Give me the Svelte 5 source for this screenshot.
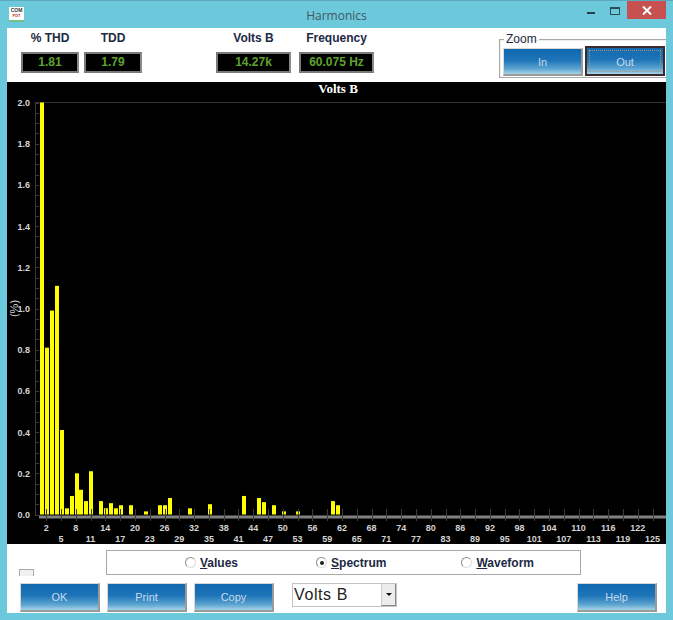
<script lang="ts">
  // Harmonic magnitudes by bar index (only non-empty bins)
  const bars: Record<number, number> = {
    0: 2.0, 1: 0.81, 2: 0.99, 3: 1.11, 4: 0.41, 5: 0.03, 6: 0.09, 7: 0.2, 8: 0.12, 9: 0.065, 10: 0.21,
    12: 0.065, 13: 0.03, 14: 0.055, 15: 0.03, 16: 0.045, 18: 0.045, 21: 0.015, 24: 0.045, 25: 0.045, 26: 0.08,
    30: 0.03, 34: 0.05, 41: 0.09, 44: 0.08, 45: 0.06, 47: 0.045, 49: 0.015, 52: 0.015, 59: 0.065, 60: 0.045,
  };
  const barList = Object.entries(bars).map(([i, v]) => ({ i: +i, v }));

  const PITCH = 4.93;
  const Y0 = 432.5; // zero line, chart-local
  const PER_UNIT = 206;

  const barX = (i: number) => 33 + i * PITCH;
  const tickX = (n: number) => 39.2 + (n - 2) * PITCH;
  const valY = (v: number) => Y0 - v * PER_UNIT;

  const yLabels = [2.0, 1.8, 1.6, 1.4, 1.2, 1.0, 0.8, 0.6, 0.4, 0.2, 0.0];
  const minorTicks = Array.from({ length: 41 }, (_, k) => k * 0.05);
  const harmonics = Array.from({ length: 42 }, (_, k) => 2 + k * 3);
</script>

<div class="window">
  <header class="titlebar">
    <div class="app-icon">
      <span class="icon-a">COM</span>
      <span class="icon-b">PDT</span>
    </div>
    <div class="title">Harmonics</div>
    <div class="win-buttons">
      <span class="win-min"></span>
      <span class="win-max"></span>
      <span class="win-close">
        <svg width="10" height="9" viewBox="0 0 10 9"><path d="M1 0.5 L9 8.5 M9 0.5 L1 8.5" stroke="#fff" stroke-width="2" /></svg>
      </span>
    </div>
  </header>

  <main class="client">
    <section class="readouts">
      <div class="readout thd"><div class="r-label">% THD</div><div class="r-value">1.81</div></div>
      <div class="readout tdd"><div class="r-label">TDD</div><div class="r-value">1.79</div></div>
      <div class="readout volts"><div class="r-label">Volts B</div><div class="r-value">14.27k</div></div>
      <div class="readout freq"><div class="r-label">Frequency</div><div class="r-value">60.075 Hz</div></div>
      <fieldset class="zoom">
        <legend>Zoom</legend>
        <button class="btn zoom-btn">In</button>
        <button class="btn zoom-btn focused"><span>Out</span></button>
      </fieldset>
    </section>

    <svg class="chart" width="659" height="462" viewBox="0 0 659 462">
      <text class="chart-title" x="331" y="11" text-anchor="middle">Volts B</text>
      <line x1="28.5" y1="20.5" x2="659" y2="20.5" stroke="#333" />
      <line x1="28.5" y1="20" x2="28.5" y2="433" stroke="#3a3a3a" />
      {#each minorTicks as t}
        <line x1="28" y1={Math.round(valY(t)) + 0.5} x2="32" y2={Math.round(valY(t)) + 0.5} stroke="#3a3a3a" />
      {/each}
      {#each yLabels as v}
        <text class="y-label" x="23" y={valY(v) + 3.5} text-anchor="end">{v.toFixed(1)}</text>
      {/each}
      <text class="y-unit" transform="translate(11 226.5) rotate(-90)" text-anchor="middle">(%)</text>

      {#each barList as b}
        <rect x={Math.round(barX(b.i))} y={valY(b.v)} width="4" height={Y0 - valY(b.v)} fill="#ffff00" />
      {/each}

      <rect x="32" y="433.5" width="627" height="3" fill="#808080" />
      {#each harmonics as n, k}
        <line x1={Math.round(tickX(n)) + 0.5} y1="427" x2={Math.round(tickX(n)) + 0.5} y2="439" stroke="#3c3c3c" />
        <text class="x-label" x={tickX(n)} y={k % 2 === 0 ? 449 : 460} text-anchor="middle">{n}</text>
      {/each}
    </svg>

    <section class="footer">
      <div class="footer-top">
        <span class="stub"></span>
        <div class="modes">
          <label class="mode values"><span class="radio"></span><span><u>V</u>alues</span></label>
          <label class="mode spectrum"><span class="radio on"></span><span><u>S</u>pectrum</span></label>
          <label class="mode waveform"><span class="radio"></span><span><u>W</u>aveform</span></label>
        </div>
      </div>
      <div class="footer-actions">
        <button class="btn action">OK</button>
        <button class="btn action">Print</button>
        <button class="btn action">Copy</button>
        <div class="combo">
          <span>Volts B</span>
          <span class="combo-arrow"><i></i></span>
        </div>
        <button class="btn action help">Help</button>
      </div>
    </section>
  </main>
</div>

<style>
  :global(body) { margin: 0; background: #6bc9db; }

  .window {
    width: 673px;
    height: 620px;
    box-sizing: border-box;
    background: #6bc9db;
    border-top: 1px solid #5aa9bc;
    font-family: "Liberation Sans", Arial, sans-serif;
    overflow: hidden;
  }

  /* ── Title bar ── */
  .titlebar {
    position: relative;
    height: 27px;
    display: flex;
    align-items: flex-start;
  }
  .app-icon {
    width: 15px;
    height: 15px;
    margin: 6px 0 0 9px;
    background: #fff;
    border-bottom: 2px solid #6fc08a;
    box-sizing: border-box;
    display: flex;
    flex-direction: column;
    align-items: center;
    line-height: 5px;
    padding-top: 1px;
    overflow: hidden;
  }
  .icon-a { font-size: 5px; font-weight: 700; color: #333; }
  .icon-b { font-size: 4px; font-weight: 700; color: #b33; }
  .title {
    position: absolute;
    left: 0;
    right: 0;
    top: 6px;
    text-align: center;
    font-family: "Open Sans", sans-serif;
    font-size: 12px;
    line-height: 17px;
    color: #44565e;
  }
  .win-buttons {
    margin-left: auto;
    margin-right: 7px;
    display: flex;
    align-items: flex-start;
  }
  .win-min {
    width: 8px;
    height: 2px;
    margin-top: 11px;
    background: #2c3c44;
  }
  .win-max {
    width: 8px;
    height: 5px;
    margin: 6px 7px 0 15px;
    border: 1px solid #2c4c58;
    border-top-width: 2px;
    box-sizing: content-box;
  }
  .win-close {
    width: 39px;
    height: 18px;
    background: #c75050;
    display: flex;
    align-items: center;
    justify-content: center;
  }

  /* ── Client area ── */
  .client {
    width: 659px;
    height: 585px;
    margin-left: 7px;
    background: #fff;
    display: flex;
    flex-direction: column;
  }

  .readouts {
    height: 54px;
    display: flex;
    align-items: flex-start;
    flex-shrink: 0;
  }
  .readout { margin-top: 2px; }
  .r-label {
    font-size: 12px;
    font-weight: 700;
    line-height: 16px;
    text-align: center;
    color: #1c2a44;
  }
  .r-value {
    margin-top: 6px;
    height: 21px;
    box-sizing: border-box;
    background: #000;
    border: 2px solid #7a7a7a;
    border-right-color: #8a8a8a;
    color: #5ea32e;
    font-size: 12px;
    font-weight: 700;
    line-height: 17px;
    text-align: center;
  }
  .thd { width: 58px; margin-left: 14px; }
  .tdd { width: 58px; margin-left: 5px; }
  .volts { width: 75px; margin-left: 74px; }
  .freq { width: 75px; margin-left: 8px; }

  .zoom {
    width: 167px;
    height: 45px;
    box-sizing: border-box;
    margin: 5px 0 0 125px;
    padding: 0 0 0 3px;
    border: 1px solid #a8a8a8;
    border-right: none;
    box-shadow: inset 1px 1px 0 #eee;
    display: flex;
    gap: 3px;
    align-items: flex-start;
    position: relative;
  }
  .zoom legend {
    padding: 0 2px;
    margin-left: 1px;
    font-size: 12px;
    line-height: 12px;
    color: #1c2a44;
  }
  .zoom-btn { width: 80px; height: 28px; margin-top: 3px; }

  /* Shared blue gradient button */
  .btn {
    padding: 0;
    box-sizing: border-box;
    border: 1px solid #9a9a9a;
    border-top-color: #d8d8d8;
    border-left-color: #d8d8d8;
    border-right-width: 2px;
    border-bottom-width: 2px;
    background: linear-gradient(180deg, #1269ae 0%, #1d74b8 45%, #5aa2cf 78%, #a4d3e6 100%);
    color: #c6dbec;
    font-family: "Liberation Sans", Arial, sans-serif;
    font-size: 11px;
    text-align: center;
  }
  .focused {
    border: 2px solid #3a2c2c;
    padding: 2px;
    margin-top: 1px;
    margin-left: -1px;
    height: 30px;
  }
  .focused span {
    display: block;
    height: 100%;
    line-height: 22px;
    border: 1px dotted #a8937a;
    box-sizing: border-box;
  }

  .chart {
    display: block;
    flex-shrink: 0;
    background: #000;
  }
  .chart-title {
    font-family: "Liberation Serif", serif;
    font-size: 13px;
    font-weight: 700;
    fill: #fff;
  }
  .y-label, .x-label {
    font-family: "Liberation Sans", Arial, sans-serif;
    font-size: 9px;
    font-weight: 700;
    fill: #d4d4d4;
  }
  .y-unit {
    font-family: "Liberation Sans", Arial, sans-serif;
    font-size: 11px;
    fill: #d4d4d4;
  }

  /* ── Footer ── */
  .footer { flex: 1; display: flex; flex-direction: column; position: relative; }
  .footer-top {
    display: flex;
    align-items: flex-start;
    height: 39px;
  }
  .stub {
    width: 13px;
    height: 6px;
    margin: 25px 0 0 12px;
    border: 1px solid #aaa;
    border-bottom: none;
    background: #f0f0f0;
    box-sizing: content-box;
  }
  .modes {
    width: 475px;
    height: 25px;
    box-sizing: border-box;
    margin: 6px 0 0 72px;
    border: 1px solid #a8a8a8;
    display: flex;
    align-items: center;
  }
  .mode {
    display: flex;
    align-items: center;
    gap: 4px;
    font-size: 12px;
    font-weight: 700;
    color: #1c2a44;
  }
  .values { margin-left: 78px; }
  .spectrum { margin-left: 78px; }
  .waveform { margin-left: 75px; }
  .radio {
    width: 9px;
    height: 9px;
    border-radius: 50%;
    border: 1px solid #8c8c8c;
    border-right-color: #ddd;
    border-bottom-color: #ddd;
    background: #fff;
    position: relative;
  }
  .radio.on::after {
    content: "";
    position: absolute;
    left: 3px;
    top: 3px;
    width: 4px;
    height: 4px;
    border-radius: 50%;
    background: #222;
  }

  .footer-actions {
    display: flex;
    align-items: flex-start;
    padding-left: 13px;
  }
  .action { width: 80px; height: 29px; margin-right: 7px; }
  .combo {
    width: 105px;
    height: 24px;
    margin-left: 11px;
    box-sizing: border-box;
    border: 1px solid #c4c4c4;
    display: flex;
    align-items: center;
    font-size: 16px;
    color: #222;
    padding-left: 1px;
  }
  .combo > span:first-child { flex: 1; letter-spacing: 0.6px; }
  .combo-arrow {
    width: 15px;
    height: 22px;
    box-sizing: border-box;
    background: #ececec;
    border-left: 1px solid #ccc;
    border-right: 1px solid #888;
    border-bottom: 1px solid #888;
    display: flex;
    align-items: center;
    justify-content: center;
  }
  .combo-arrow i {
    border-left: 3px solid transparent;
    border-right: 3px solid transparent;
    border-top: 3px solid #111;
  }
  .help { margin-left: 180px; margin-right: 0; }
</style>
